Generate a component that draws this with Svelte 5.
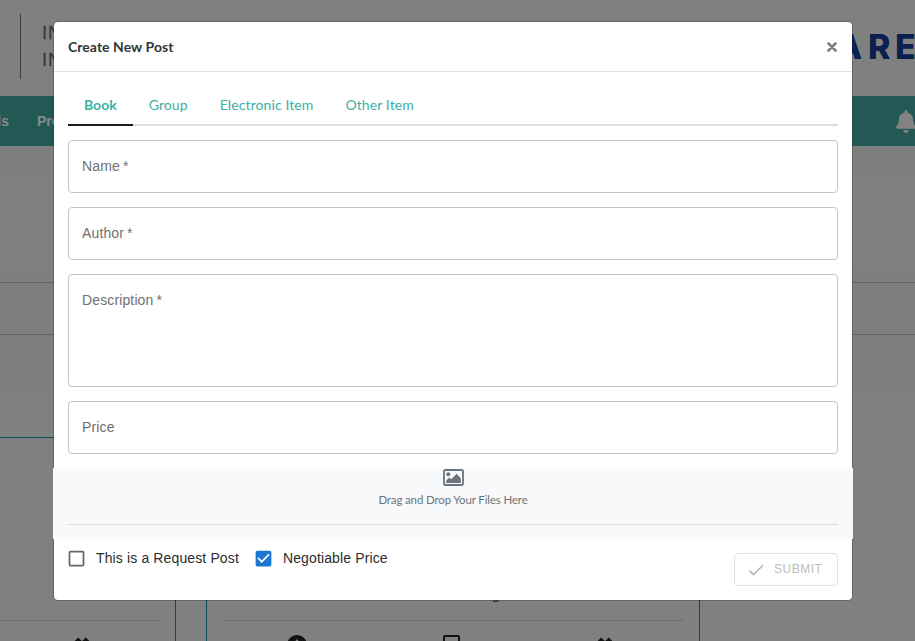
<script>
  const tabs = ['Book', 'Group', 'Electronic Item', 'Other Item'];
  let active = $state('Book');
  let request = $state(false);
  let negotiable = $state(true);
</script>

{#snippet shuffle()}
  <svg width="18" height="18" viewBox="0 0 18 18"><path d="M1.5 4.2 5.2.5 9 4.2 12.8.5l3.7 3.7-3.3 3.6L16.500 12H1.500l3.300-4.200z" fill="#111" /></svg>
{/snippet}

<div class="page">
  <header>
    <div class="name"><span>IN</span><span>IN</span></div>
    <div class="brand"><span class="a">A</span><span class="r">R</span><span>E</span></div>
  </header>
  <nav>
    <div class="links"><span>ls</span><span>Pro</span></div>
    <svg class="bell" width="20" height="23" viewBox="0 0 448 512"><path fill="#828282" d="M224 512c35.320 0 63.970-28.650 63.970-64H160.030c0 35.350 28.650 64 63.970 64zm215.390-149.710c-19.320-20.760-55.470-51.990-55.470-154.290 0-77.700-54.480-139.900-127.940-155.160V32c0-17.670-14.320-32-31.980-32s-31.980 14.330-31.980 32v20.840C118.560 68.100 64.080 130.300 64.080 208c0 102.300-36.150 133.530-55.470 154.290-6 6.450-8.660 14.160-8.610 21.710.110 16.400 12.980 32 32.100 32h383.800c19.120 0 32-15.600 32.100-32 .050-7.550-2.610-15.270-8.610-21.710z" /></svg>
  </nav>
  <div class="strip"></div>
  <div class="blank"></div>
  <div class="bands"><div class="ruled"></div></div>
  <main>
    <section class="card first">
      <div class="foot"><span class="x1">{@render shuffle()}</span></div>
    </section>
    <section class="card second">
      <div class="body">g</div>
      <div class="foot">
        <svg class="c" width="20" height="20" viewBox="0 0 20 20"><circle cx="10" cy="10" r="10" fill="#111" /><path d="M10 4 6 9h8z" fill="#808080" /></svg>
        <svg class="b" width="17" height="17" viewBox="0 0 17 17"><rect x="1" y="1" width="15" height="15" rx="1" fill="none" stroke="#111" stroke-width="2" /></svg>
        <span class="x2">{@render shuffle()}</span>
      </div>
    </section>
  </main>
</div>

<div class="modal" role="dialog" aria-label="Create New Post">
  <div class="head">
    <h1>Create New Post</h1>
    <button class="close" aria-label="Close"><svg width="10" height="10" viewBox="0 0 10 10"><path d="M1.500 1.500l7 7m0-7l-7 7" stroke="#808080" stroke-width="2.700" stroke-linecap="round" /></svg></button>
  </div>
  <div class="content">
    <div class="tabs">
      {#each tabs as t}
        <button class:active={t === active} onclick={() => (active = t)}>{t}</button>
      {/each}
    </div>
    <div class="fields">
      <div class="field">Name *</div>
      <div class="field">Author *</div>
      <div class="field tall">Description *</div>
      <div class="field">Price</div>
    </div>
  </div>
  <div class="drop">
    <svg width="21" height="17" viewBox="0 0 21 17"><rect x="1" y="1" width="19" height="15" rx="1.300" fill="none" stroke="#6c757d" stroke-width="1.800" /><circle cx="5.300" cy="5.200" r="2" fill="#6c757d" /><path d="M3.200 14v-2.600L6.300 8.500l2 1.800L13.500 4.800l4.300 4.500V14z" fill="#6c757d" /></svg>
    <p>Drag and Drop Your Files Here</p>
    <div class="rule"></div>
  </div>
  <div class="actions">
    <button class="check" onclick={() => (request = !request)}>
      <svg width="21" height="21" viewBox="0 0 24 24"><path fill="#666" d={request ? 'M19 3H5c-1.110 0-2 .9-2 2v14c0 1.100.890 2 2 2h14c1.110 0 2-.9 2-2V5c0-1.100-.890-2-2-2z' : 'M19 5v14H5V5h14m0-2H5c-1.100 0-2 .9-2 2v14c0 1.100.9 2 2 2h14c1.100 0 2-.9 2-2V5c0-1.100-.9-2-2-2z'} /></svg>
      <span>This is a Request Post</span>
    </button>
    <button class="check" onclick={() => (negotiable = !negotiable)}>
      <svg width="21" height="21" viewBox="0 0 24 24"><path fill="#1976d2" d={negotiable ? 'M19 3H5c-1.110 0-2 .9-2 2v14c0 1.100.890 2 2 2h14c1.110 0 2-.9 2-2V5c0-1.100-.890-2-2-2zm-9 14l-5-5 1.410-1.410L10 14.170l7.590-7.590L19 8l-9 9z' : 'M19 5v14H5V5h14m0-2H5c-1.100 0-2 .9-2 2v14c0 1.100.9 2 2 2h14c1.100 0 2-.9 2-2V5c0-1.100-.9-2-2-2z'} /></svg>
      <span>Negotiable Price</span>
    </button>
    <button class="submit" disabled>
      <svg width="20" height="20" viewBox="0 0 24 24"><path fill="#b5b5b5" d="M9 16.170 4.830 12l-1.420 1.410L9 19 21 7l-1.410-1.410z" /></svg>
      <span>SUBMIT</span>
    </button>
  </div>
</div>

<style>
  :global(body) { overflow: hidden; background: #808080; }
  * { box-sizing: border-box; }
  button { border: 0; background: none; padding: 0; font: inherit; }
  svg { display: block; flex: none; }
  .page { width: 915px; height: 641px; overflow: hidden; background: #808080; font-family: "Liberation Sans", Arial, sans-serif; }
  header { height: 96px; padding: 14px 0 0 20px; display: flex; justify-content: space-between; }
  .name { height: 65px; border-left: 1px solid #3f3f3f; padding: 5px 0 0 21px; display: flex; flex-direction: column; font-size: 18.500px; line-height: 27px; letter-spacing: .8px; color: #3c3c3c; -webkit-text-stroke: .3px #3c3c3c; }
  .brand { display: flex; width: 79px; height: 66px; overflow: hidden; font: 800 34px/66px Inter, sans-serif; color: #0c2050; }
  .brand span { flex: none; }
  .brand .a { width: 32px; }
  .brand .r { width: 27px; }
  nav { height: 50px; background: #225955; display: flex; justify-content: space-between; align-items: center; overflow: hidden; }
  .links { display: flex; gap: 28px; font: 700 14px/50px "Liberation Sans", Arial, sans-serif; color: #858b8a; }
  .links span:first-child { width: 9px; display: flex; justify-content: flex-end; }
  .bell { margin-right: -1px; }
  .strip { height: 28px; background: #7c7f7e; }
  .blank { height: 94px; }
  .bands { height: 121px; background: #7c7f7e; padding-top: 14px; }
  .ruled { height: 53px; border: solid #616463; border-width: 1px 0; }
  main { display: flex; gap: 30px; padding-top: 48px; }
  .card { height: 260px; border: 1px solid #0d4f57; }
  .first { width: 176px; border-left: 0; padding: 182px 15px 0 0; }
  .second { width: 494px; padding: 148px 15px 0; }
  .body { height: 34px; padding-left: 270px; font-size: 14px; line-height: 16px; color: #222; }
  .foot { border-top: 1px solid #6f6f6f; display: flex; padding-top: 14px; }
  .x1 { margin: 2px 0 0 73px; }
  .c { margin-left: 65px; }
  .b { margin-left: 136px; }
  .x2 { margin: 2px 0 0 136px; }
  .modal { position: absolute; left: 53px; top: 21px; width: 800px; height: 580px; border: 1px solid rgba(0, 0, 0, .2); background: #fff; background-clip: padding-box; border-radius: 5px; font-family: Lato, sans-serif; }
  .head { height: 50px; padding: 0 15px 0 14px; border-bottom: 1px solid #dee0e1; display: flex; align-items: center; justify-content: space-between; }
  h1 { margin: 0; font-size: 14px; line-height: 20px; font-weight: 700; letter-spacing: .04px; color: #333537; }
  .content { padding: 13px 14px 0; }
  .tabs { display: flex; height: 41px; border-bottom: 2px solid #dedede; }
  .tabs button { height: 41px; padding: 0 16px; font-size: 14px; line-height: 39px; letter-spacing: .1px; color: #3cb0a6; border-bottom: 2px solid transparent; }
  .tabs .active { font-weight: 700; letter-spacing: 0; border-color: #1b1c1d; }
  .fields { display: flex; flex-direction: column; gap: 14px; padding-top: 14px; font-family: "Liberation Sans", Arial, sans-serif; }
  .field { height: 53px; border: 1px solid #c4c4c4; border-radius: 4px; padding: 15px 13px; font-size: 14px; line-height: 20px; letter-spacing: .13px; word-spacing: -1px; color: #707070; }
  .tall { height: 113px; }
  .drop { height: 71px; margin: 14px -1px 0; padding: 1px 15px 0; position: relative; background: #f8f9fa; display: flex; flex-direction: column; align-items: center; color: #6c757d; }
  .drop p { margin: 6px 0 0; font-size: 11.500px; line-height: 16px; letter-spacing: -.14px; }
  .rule { width: 100%; margin-top: 16px; border-top: 1px solid #dadde0; }
  .actions { display: flex; padding: 9px 14px 0 12px; font-family: "Liberation Sans", Arial, sans-serif; }
  .check { display: flex; align-items: center; height: 20px; gap: 9px; margin-left: 14px; font-size: 14px; letter-spacing: .13px; color: #2c2c2c; }
  .check:first-child { margin-left: 0; }
  .submit { margin: 5px 0 0 auto; width: 104px; height: 33px; border: 1px solid #e0e0e0; border-radius: 4px; display: flex; align-items: center; gap: 8px; padding: 0 0 0 11px; font-size: 12px; letter-spacing: .5px; color: #bcbcbc; }
  .submit span { padding-bottom: 2px; }
</style>
